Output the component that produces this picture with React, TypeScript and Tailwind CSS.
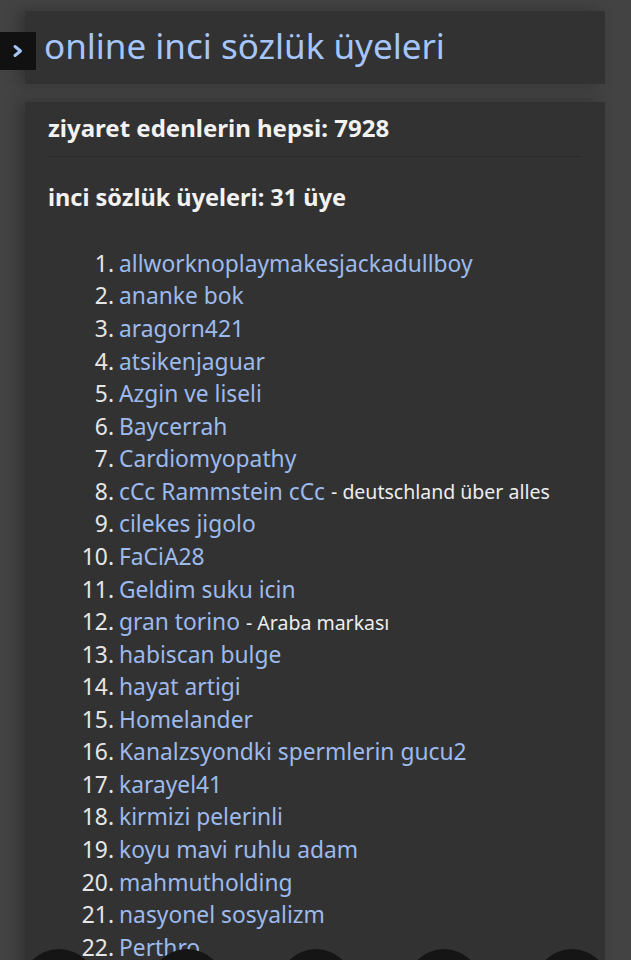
import React from "react";

const members: [string, string?][] = [
  ["allworknoplaymakesjackadullboy"],
  ["ananke bok"],
  ["aragorn421"],
  ["atsikenjaguar"],
  ["Azgin ve liseli"],
  ["Baycerrah"],
  ["Cardiomyopathy"],
  ["cCc Rammstein cCc", "deutschland über alles"],
  ["cilekes jigolo"],
  ["FaCiA28"],
  ["Geldim suku icin"],
  ["gran torino", "Araba markası"],
  ["habiscan bulge"],
  ["hayat artigi"],
  ["Homelander"],
  ["Kanalzsyondki spermlerin gucu2"],
  ["karayel41"],
  ["kirmizi pelerinli"],
  ["koyu mavi ruhlu adam"],
  ["mahmutholding"],
  ["nasyonel sosyalizm"],
  ["Perthro"],
];

export default function App() {
  return (
    <div
      className="relative h-[960px] w-[631px] overflow-hidden bg-[#434343]"
      style={{ fontFamily: '"Noto Sans", "Open Sans", sans-serif' }}
    >
      <div className="flex flex-col gap-[18px] pt-[11px] pl-[25px] pr-[26px]">
        <div className="relative flex h-[73px] items-center bg-[#323232] pl-[19px] shadow-[-6px_0_14px_rgba(0,0,0,0.25)]">
          <div className="absolute left-[-25px] top-[21px] flex h-[38px] w-[36px] items-center justify-center bg-[#111111]">
            <svg width="12" height="14" viewBox="0 0 12 14">
              <path d="M3 2.5 L8.5 7 L3 11.5" fill="none" stroke="#a6c4f6" strokeWidth="3" strokeLinecap="round" strokeLinejoin="round" />
            </svg>
          </div>
          <h1 className="text-[35px] leading-none text-[#a6c6fb] mt-[-4px]">online inci sözlük üyeleri</h1>
        </div>
        <div className="flex h-[900px] flex-col bg-[#323232] px-[23px] shadow-[-6px_0_14px_rgba(0,0,0,0.25)]">
          <div className="border-b border-[#2a2a2a] pt-[10px] pb-[12px] pr-[2px]">
            <h2 className="text-[24px] font-bold leading-[32px] text-[#f2f2f2]">ziyaret edenlerin hepsi: 7928</h2>
          </div>
          <h2 className="mt-[24px] text-[23.5px] font-bold leading-[32px] text-[#f2f2f2]">inci sözlük üyeleri: 31 üye</h2>
          <ol className="mt-[35px] flex flex-col">
            {members.map(([name, desc], i) => (
              <li key={i} className="flex h-[32.57px] items-center text-[22.8px] leading-none">
                <span className="w-[66px] shrink-0 text-right text-[#e6e6e6]">{i + 1}.</span>
                <span className="ml-[5px] whitespace-nowrap text-[#9dbaec]">{name}</span>
                {desc && (
                  <span className="ml-[6px] whitespace-nowrap text-[19.5px] text-[#ededed]">- {desc}</span>
                )}
              </li>
            ))}
          </ol>
        </div>
      </div>
      <div className="pointer-events-none absolute left-0 right-0 top-[949px] flex justify-between px-[21px]">
        {[0, 1, 2, 3, 4].map((k) => (
          <div key={k} className="h-[76px] w-[76px] shrink-0 rounded-full bg-[#151515]" />
        ))}
      </div>
    </div>
  );
}
